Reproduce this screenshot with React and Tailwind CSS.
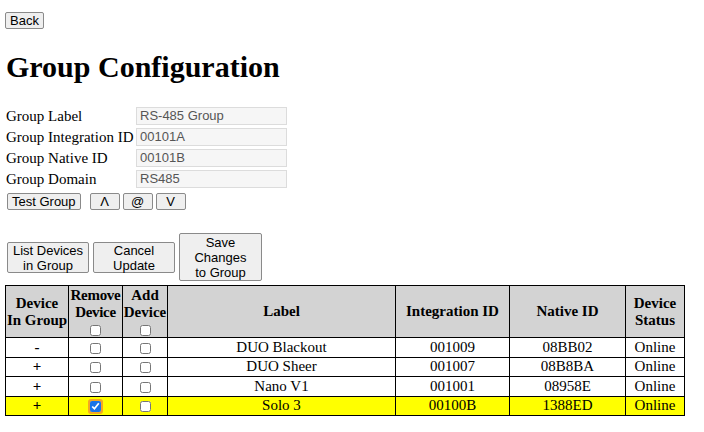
import React, { useState } from 'react'

const devices = [
    { inGroup: '-', label: 'DUO Blackout', integration: '001009', native: '08BB02', status: 'Online', remove: false },
    { inGroup: '+', label: 'DUO Sheer', integration: '001007', native: '08B8BA', status: 'Online', remove: false },
    { inGroup: '+', label: 'Nano V1', integration: '001001', native: '08958E', status: 'Online', remove: false },
    { inGroup: '+', label: 'Solo 3', integration: '00100B', native: '1388ED', status: 'Online', remove: true },
];

const fields = [
    ['Group Label', 'RS-485 Group'],
    ['Group Integration ID', '00101A'],
    ['Group Native ID', '00101B'],
    ['Group Domain', 'RS485'],
];

const btn = "bg-[#efefef] border border-[#8a8a8a] rounded-[2px] text-black text-[13px] leading-[15px] font-['Liberation_Sans',Arial,sans-serif]";

function Check({ checked, focus }) {
    const box = <input type="checkbox" defaultChecked={checked} className="w-[11px] h-[11px] m-0 align-middle accent-[#1a73e8]" />;
    if (!focus) return box;
    return (
        <span className="inline-flex align-middle p-[2px] bg-[#f5a623] rounded-[3px]">{box}</span>
    );
}

export default function App() {
    const [rows] = useState(devices);

    return (
        <div className="min-h-[432px] bg-white text-black font-['Liberation_Serif','Times_New_Roman',serif] text-[15px] px-[5px] pt-[12px]">
            <div className="flex">
                <button className={`${btn} h-[17px] px-[4px]`}>Back</button>
            </div>

            <h1 className="text-[30px] font-bold leading-[34px] mt-[21px] ml-[1px]">Group Configuration</h1>

            <div className="mt-[23px] ml-[1px] grid grid-cols-[130px_151px] gap-y-[3px]">
                {fields.map(([label, value]) => (
                    <React.Fragment key={label}>
                        <div className="leading-[18px] whitespace-nowrap">{label}</div>
                        <input
                            readOnly
                            value={value}
                            className="h-[18px] border border-[#dcdcdc] bg-[#f6f6f6] text-[#555] px-[3px] text-[13px] font-['Liberation_Sans',Arial,sans-serif] outline-none"
                        />
                    </React.Fragment>
                ))}
            </div>

            <div className="flex items-center mt-[5px] ml-[2px]">
                <button className={`${btn} h-[17px] px-[4px]`}>Test Group</button>
                <button className={`${btn} h-[17px] w-[30px] ml-[9px]`}>Λ</button>
                <button className={`${btn} h-[17px] w-[30px] ml-[3px]`}>@</button>
                <button className={`${btn} h-[17px] w-[30px] ml-[3px]`}>V</button>
            </div>

            <div className="flex items-center mt-[23px] ml-[2px] gap-[4px]">
                <button className={`${btn} w-[82px] h-[31px] leading-[15px]`}>List Devices<br />in Group</button>
                <button className={`${btn} w-[82px] h-[31px] leading-[15px]`}>Cancel<br />Update</button>
                <button className={`${btn} w-[83px] h-[48px] leading-[15px]`}>Save<br />Changes<br />to Group</button>
            </div>

            <table className="mt-[4px] border-collapse w-[680px] table-fixed">
                <colgroup>
                    <col className="w-[63px]" />
                    <col className="w-[54px]" />
                    <col className="w-[45px]" />
                    <col className="w-[228px]" />
                    <col className="w-[114px]" />
                    <col className="w-[116px]" />
                    <col className="w-[59px]" />
                </colgroup>
                <thead>
                    <tr className="bg-[#d3d3d3] h-[52px]">
                        <th className="border border-black px-0 leading-[17px] whitespace-nowrap">Device<br />In Group</th>
                        <th className="border border-black px-0 leading-[17px] tracking-[-0.3px]">
                            Remove Device
                            <div className="leading-[14px]"><Check /></div>
                        </th>
                        <th className="border border-black px-0 leading-[17px]">
                            Add Device
                            <div className="leading-[14px]"><Check /></div>
                        </th>
                        <th className="border border-black leading-[17px]">Label</th>
                        <th className="border border-black leading-[17px]">Integration ID</th>
                        <th className="border border-black leading-[17px]">Native ID</th>
                        <th className="border border-black leading-[17px]">Device Status</th>
                    </tr>
                </thead>
                <tbody>
                    {rows.map((d) => (
                        <tr key={d.label} className={`h-[19.5px] ${d.remove ? 'bg-[#ffff00]' : ''}`}>
                            <td className="border border-black text-center font-bold leading-[17px]">{d.inGroup}</td>
                            <td className="border border-black text-center leading-[15px] p-0"><Check checked={d.remove} focus={d.remove} /></td>
                            <td className="border border-black text-center leading-[17px]"><Check /></td>
                            <td className="border border-black text-center leading-[17px]">{d.label}</td>
                            <td className="border border-black text-center leading-[17px]">{d.integration}</td>
                            <td className="border border-black text-center leading-[17px]">{d.native}</td>
                            <td className="border border-black text-center leading-[17px]">{d.status}</td>
                        </tr>
                    ))}
                </tbody>
            </table>
        </div>
    );
}
